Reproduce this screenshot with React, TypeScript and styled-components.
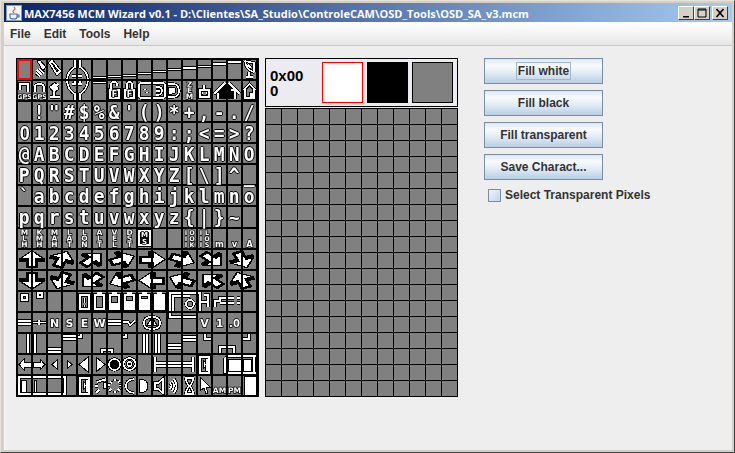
import React from "react";
import styled, { createGlobalStyle } from "styled-components";

const Global = createGlobalStyle`
  html, body { margin: 0; padding: 0; background: #d4d0c8; }
  #root { width: 735px; height: 453px; overflow: hidden; }
`;

const Frame = styled.div`
  box-sizing: border-box; width: 735px; height: 453px; display: flex; flex-direction: column;
  background: #d4d0c8; border: 1px solid; border-color: #e6e3dc #404040 #404040 #e6e3dc; padding: 2px 2px 2px 3px;
`;
const TitleBar = styled.div`
  height: 19px; flex: none; display: flex; align-items: center; padding: 0 4px 0 2px;
  background: linear-gradient(90deg, #0a246a 0%, #a6caf0 100%);
`;
const TitleIcon = styled.svg`width: 16px; height: 16px; flex: none; margin-right: 2px;`;
const TitleText = styled.div`
  flex: 1; color: #fff; font: bold 11px/17px "Open Sans", sans-serif; padding-top: 1px; white-space: nowrap; letter-spacing: 0;
`;
const WinBtn = styled.div<{ $gap?: number }>`
  width: 16px; height: 14px; box-sizing: border-box; flex: none; background: #d4d0c8; margin-left: ${p => p.$gap ?? 0}px;
  border: 1px solid; border-color: #fff #404040 #404040 #fff; display: grid; place-items: center;
`;
const BtnGlyph = styled.svg`width: 12px; height: 10px;`;
const MenuBar = styled.div`
  height: 24px; flex: none; display: flex; align-items: center; gap: 13px; padding: 0 0 0 6px; box-sizing: border-box;
  background: linear-gradient(180deg, #ffffff 0%, #f4f4f4 50%, #e6e6e6 100%); border-bottom: 1px solid #c8c8c8;
`;
const MenuItem = styled.span`font: bold 12px "Liberation Sans", Arial, sans-serif; color: #333;`;
const Content = styled.div`
  flex: 1; display: flex; align-items: flex-start; background: #eeeeee; padding: 12px 0 0 12px; box-shadow: inset 1px 0 #fafafa;
`;
const CharGrid = styled.div`
  width: 243px; height: 339px; box-sizing: border-box; flex: none; background: #000; padding: 2px 1px 0 2px;
  display: grid; grid-template-columns: repeat(16, 13px); grid-template-rows: repeat(16, 19.07px); column-gap: 2px; row-gap: 2px;
`;
const Cell = styled.div<{ $sel?: boolean }>`
  background: #808080; display: grid; place-items: center;
  box-shadow: ${p => (p.$sel ? "inset 0 0 0 1px #f00, 0 0 0 1px #f00" : "none")};
`;
const Letter = styled.span<{ $plain?: boolean }>`
  font: bold 17px/19px ${p => (p.$plain ? '"Liberation Sans", Arial' : '"DejaVu Sans Mono"')}, monospace;
  color: #fff; display: block; height: 19px; transform: translateY(1px) scale(1.06, 1.14); will-change: transform;
  text-shadow: 1px 0 #000, -1px 0 #000, 0 1px #000, 0 -1px #000;
`;
const GlyphSvg = styled.svg`width: 13px; height: 19px; display: block; overflow: hidden; will-change: transform;`;
const SmallText = styled.text<{ $size: number }>`
  font: bold ${p => p.$size}px "DejaVu Sans", sans-serif; fill: #fff; text-anchor: middle; stroke: #000; stroke-width: 1.4px; paint-order: stroke;
`;
const EditorCol = styled.div`width: 193px; margin-left: 6px; flex: none; display: flex; flex-direction: column; gap: 1px;`;
const InfoPanel = styled.div`
  height: 49px; box-sizing: border-box; border: 1px solid #000; background: #ecebf0; display: flex; align-items: center; padding: 0 4px; gap: 4px;
`;
const InfoLabel = styled.div`width: 52px; margin-right: -4px; font: bold 15px/15px "Liberation Sans", Arial, sans-serif; color: #000; margin-top: 1px;`;
const Swatch = styled.div<{ $bg: string; $line: string }>`
  width: 41px; height: 41px; box-sizing: border-box; background: ${p => p.$bg}; border: 1px solid ${p => p.$line};
`;
const EditGrid = styled.div`
  background: #000; padding: 1px; display: grid; grid-template-columns: repeat(12, 15px); grid-auto-rows: 15px; gap: 1px;
`;
const EditCell = styled.div`background: #808080;`;
const Controls = styled.div`width: 119px; margin-left: 26px; flex: none; display: flex; flex-direction: column; gap: 6px;`;
const Button = styled.button`
  height: 26px; width: 119px; box-sizing: border-box; padding: 0; border: 1px solid #7a8ea3; color: #333; display: grid; place-items: center;
  font: bold 12px "Liberation Sans", Arial, sans-serif;
  background: linear-gradient(180deg, #dde8f3 0%, #f8fbfd 28%, #e3edf6 55%, #b8cfe5 100%);
`;
const Focus = styled.span<{ $on?: boolean }>`
  padding: 1px 1px; border: 1px solid ${p => (p.$on ? "#a3b8cc" : "transparent")};
`;
const CheckRow = styled.label`display: flex; align-items: center; gap: 4px; margin: 2px 0 0 4px; white-space: nowrap; font: bold 12px "Liberation Sans", Arial, sans-serif; color: #333;`;
const CheckBox = styled.span`
  width: 13px; height: 13px; box-sizing: border-box; flex: none; border: 1px solid #7a8ea3;
  background: linear-gradient(135deg, #eef4fa 0%, #c4d6e8 100%);
`;

type G = {
  s?: string; b?: string; w?: string;
  t?: [number, number, string][]; size?: number; ox?: number; rot?: number; big?: string;
};

const line = (y: number): G => ({ s: `M0 ${y}H13` });
const stack = (a: string, b: string, c: string): G => ({ t: [[6.5, 6, a], [6.5, 12, b], [6.5, 18, c]], size: 7.5 });
const batt = (top: number): G => ({ s: "M2 3H11V17H2Z M4 1H9", w: top < 17 ? `M2 ${top}H11V17H2Z` : undefined });
const letter = (c: string): G => ({ t: [[6.5, 14, c]], size: 11 });
const blank: G = {};

const row0: G[] = [
  blank,
  { w: "M4 1L7 0L13 7L10 11Z", s: "M4 10L9 15M3 13L7 16M6 9L11 13" },
  { s: "M2 3L4 1L12 11L9 14Z" },
  { s: "M12 0V7Q5 11 4 19 M9 16H13" },
  { s: "M2 0V7Q9 11 10 19 M0 16H4" },
  line(17.5), line(16.5), line(15.5), line(13.5), line(11.5), line(9.5), line(8), line(6.5), line(4), line(2),
  { s: "M2 1Q3 10 11 12 M2 1L11 3L11 12 M6 12V17 M3 17H10 M5 5L8 8" },
];
const row1: G[] = [
  { s: "M2 9V3H10V11", t: [[6.5, 18, "GPS"]], size: 6.5 },
  { s: "M2 11V6Q2 3 6 3Q11 3 11 6V11", t: [[6.5, 18, "GPS"]], size: 6.5 },
  { w: "M1 6L7 1L11 8L6 12Z", s: "M6 7L10 3 M6 11V15 M2 16H12" },
  { s: "M4 0Q5 9 12 13V19 M9 3H13 M12 0V3" },
  { s: "M10 0Q9 9 2 13V19 M0 3H4 M2 0V3" },
  line(1.5),
  { s: "M3 9V4Q3 1 6 1Q9 1 9 4V5 M2 9H11V17H2Z", t: [[6.5, 16, "F"]], size: 8 },
  { s: "M4 9V4Q4 1 6.5 1Q9 1 9 4V9 M2 9H11V17H2Z", t: [[6.5, 16, "F"]], size: 8 },
  { s: "M13 2H4Q1 2 1 5V14Q1 17 4 17H13 M7 8V9 M9 11V12" },
  { s: "M0 2H9Q12 2 12 5V14Q12 17 9 17H0 M3 6Q9 5 9 10Q9 14 3 14 M3 10H7" },
  { s: "M0 3H5Q11 3 11 10Q11 16 5 16H0", w: "M0 6H4Q8 6 8 10Q8 13 4 13H0Z" },
  { t: [[6.5, 6, "Z"], [6.5, 12, "E"], [6.5, 18, "M"]], size: 7.5 },
  { s: "M6 4V9 M2 9H11V16H2Z M4 12H5 M8 12H9" },
  { b: "M2 13L13 2V18H5V13Z", s: "M1 13L12 2 M5 12V18" },
  { b: "M0 2L12 13H9V18H0Z", s: "M1 2L12 13 M3 9H7V18" },
  { s: "M1 9L6.5 3L12 9 M2 9V17H11V9", w: "M6 11H10V17H6Z" },
];
const row8: G[] = [
  stack("M", "L", "H"), stack("K", "M", "H"), stack("M", "A", "H"), stack("L", "A", "T"),
  stack("L", "O", "N"), stack("A", "L", "T"), stack("V", "E", "L"), stack("D", "S", "T"),
  { b: "M1 2H12V16H1Z", s: "M1 2H12V16H1Z", t: [[6.5, 8, "M"], [6.5, 15, "S"]], size: 7 },
  blank, blank,
  { t: [[3, 6, "I"], [9, 6, "O"], [3, 12, "I"], [9, 12, "O"], [3, 18, "I"], [9, 18, "K"]], size: 6.5 },
  { t: [[3, 6, "I"], [9, 6, "L"], [3, 12, "I"], [9, 12, "O"], [3, 18, "I"], [9, 18, "S"]], size: 6.5 },
  { t: [[6.5, 18, "m"]], size: 8.5 }, { t: [[6.5, 18, "v"]], size: 8.5 }, { t: [[6.5, 18, "A"]], size: 8.5 },
];
const arrowPair = (i: number): G[] => [{ rot: i * 22.5, ox: 0 }, { rot: i * 22.5, ox: 15 }];
const row9: G[] = [0, 1, 2, 3, 4, 5, 6, 7].flatMap(arrowPair);
const row10: G[] = [8, 9, 10, 11, 12, 13, 14, 15].flatMap(arrowPair);
const row11: G[] = [
  { s: "M4 3H9V8H4Z" }, { s: "M5 1H9V5H5Z" }, blank, blank,
  { s: "M2 3H11V17H2Z M6.5 6V11 M6.5 13V15" },
  batt(17), batt(10), batt(8), batt(6), batt(3),
  { s: "M2 19V1H13 M5 19V4H13" },
  { s: "M0 1H13 M0 4H7 M7 8A4 4 0 1 1 7 16A4 4 0 1 1 7 8" },
  { s: "M0 1H2V19 M6 3H10V15 M2 10H10" },
  { s: "M2 15V9H7V6H13 M7 11H13" },
  { s: "M0 6H6 M0 11H6 M9 6H12 M9 11H12" },
  blank,
];
const row12: G[] = [
  { s: "M0 8H13 M0 11H13" }, { s: "M0 9.5H13 M6 7V12" },
  letter("N"), letter("S"), letter("E"), letter("W"),
  { s: "M0 8H13 M0 11H13" }, { s: "M0 9H5L7 12L12 8" },
  { s: "M13 4Q6 4 6 10Q6 16 13 16", w: "M13 6L9 12H13Z" }, { s: "M0 4Q7 4 7 10Q7 16 0 16", w: "M0 6L4 12H0Z" },
  { s: "M2 0V4H13" }, { s: "M0 4H13" },
  letter("V"), letter("1"), { t: [[6.5, 14, ".0"]], size: 10 }, blank,
];
const row13: G[] = [
  { s: "M10 0V19" }, { s: "M2 0V19" }, { s: "M0 15H13 M0 18H13" }, { s: "M0 2H13 M0 5H13" },
  { s: "M3 0V3H0" }, { s: "M9 19V16H13" }, { s: "M0 16H4V19" }, { s: "M3 0V3H0" },
  { s: "M6 0V19 M9 0V19" }, { s: "M3 0V19 M6 0V19" }, { s: "M0 11H13 M0 14H13" }, { s: "M0 3H13 M0 6H13" },
  { s: "M7 0V5H13" }, { s: "M7 19V13H13" }, { s: "M0 13H6V19" }, { s: "M0 5H6V0" },
];
const row14: G[] = [
  { w: "M1 9.5L6 4V7H13V12H6V15Z" }, { w: "M12 9.5L7 4V7H0V12H7V15Z" },
  { w: "M4 9.5L9 5V14Z" }, { w: "M9 9.5L4 5V14Z" },
  { w: "M1 9.5L10 2V17Z" }, { w: "M12 9.5L3 2V17Z" },
  { s: "M6.5 4A5.5 5.5 0 1 1 6.5 15A5.5 5.5 0 1 1 6.5 4", b: "M6.5 4A5.5 5.5 0 1 1 6.5 15A5.5 5.5 0 1 1 6.5 4" },
  { s: "M6.5 3A6 6 0 1 1 6.5 15A6 6 0 1 1 6.5 3 M6.5 7A2 2 0 1 1 6.5 11A2 2 0 1 1 6.5 7" },
  blank,
  { s: "M2 2V17 M2 8H13 M2 11H13" }, { s: "M0 8H13 M0 11H13" }, { s: "M0 8H10 M0 11H10 M10 2V17" },
  { s: "M2 2H11V18H2Z M9 4V16", w: "M5 5L9 9.5L5 14Z" },
  { s: "M12 3H13 M12 3V17H13" },
  { w: "M0 4H13V16H0Z", s: "M0 1H13 M0 18H13" },
  { w: "M0 4H8V16H0Z", s: "M0 1H13 M0 18H13 M11 1V18" },
];
const row15: G[] = [
  { w: "M3 4H8V16H3Z", s: "M0 1H13 M0 18H13 M1 1V18" },
  { w: "M1 4H3V16H1Z", s: "M0 1H13 M0 18H13" },
  { s: "M0 1H13 M0 18H13" },
  { s: "M0 1H2V18H0" },
  { s: "M2 2H11V18H2Z M9 4V16", w: "M5 5L9 9.5L5 14Z" },
  { s: "M4 6L13 3 M5 10H2 M6 14L3 17 M11 5L13 3", w: "M10 7L13 6V13L10 12Z" },
  { s: "M2 6L4 7 M0 9H2 M3 13L1 15 M7 3V5 M7 15V17 M10 6L12 5 M10 13L12 15 M11 9.5H13" },
  { s: "M11 3Q3 4 3 10Q3 16 11 17" },
  { w: "M1 3Q10 3 10 10Q10 17 1 17Z" },
  { s: "M2 7H5L10 3V17L5 13H2Z" },
  { s: "M2 7Q5 9.5 2 13 M4 5Q8 9.5 4 15 M6 3Q11 9.5 6 17" },
  { s: "M2 2H11 M2 18H11 M3 2Q3 7 6.5 10Q10 7 10 2 M3 18Q3 13 6.5 10Q10 13 10 18", w: "M4 16L6.5 12L9 16Z" },
  { w: "M2 1L12 11H8L10 17L8 18L6 12L2 15Z" },
  { t: [[6.5, 17, "AM"]], size: 7.5 }, { t: [[6.5, 17, "PM"]], size: 7.5 },
  { w: "M1 0H13V19H1Z" },
];

const textRow = (s: string): G[] => Array.from(s).map(c => ({ big: c === " " ? "" : c }));
const rows: G[] = [
  ...row0, ...row1,
  ...textRow(" !\"#$%&'()*+,-./"),
  ...textRow("0123456789:;<=>?"),
  ...textRow("@ABCDEFGHIJKLMNO"),
  ...textRow("PQRSTUVWXYZ[\\]^_"),
  ...textRow("`abcdefghijklmno"),
  ...textRow("pqrstuvwxyz{|}~ "),
  ...row8, ...row9, ...row10, ...row11, ...row12, ...row13, ...row14, ...row15,
];

const Glyph: React.FC<{ g: G }> = ({ g }) => {
  if (g.big !== undefined) return <Letter $plain={g.big === "0"}>{g.big}</Letter>;
  if (g.rot !== undefined) {
    const ox = g.ox ?? 0;
    return (
      <GlyphSvg viewBox={`${ox} 0 13 19`}>
        <g transform={`translate(14 9.5) scale(1.2 .8) rotate(${g.rot})`} shapeRendering="crispEdges">
          <path d="M0 -12L11 -1V3H5V11H-5V3H-11V-1Z" fill="#000" />
          <path d="M0 -10L8 -2H2.5V8H-2.5V-2H-8Z" fill="#fff" />
        </g>
      </GlyphSvg>
    );
  }
  return (
    <GlyphSvg viewBox="0 0 13 19">
      <g shapeRendering="crispEdges">
        {g.b && <path d={g.b} fill="#000" />}
        {g.s && <path d={g.s} fill="none" stroke="#000" strokeWidth={3.4} />}
        {g.w && <path d={g.w} fill="#fff" stroke="#000" strokeWidth={1} />}
        {g.s && <path d={g.s} fill="none" stroke="#fff" strokeWidth={1.6} />}
      </g>
      {g.t?.map(([x, y, str], i) => <SmallText key={i} x={x} y={y} $size={g.size ?? 7}>{str}</SmallText>)}
    </GlyphSvg>
  );
};

export default function App() {
  return (
    <>
      <Global />
      <Frame>
        <TitleBar>
          <TitleIcon viewBox="0 0 16 16">
            <rect x="0.5" y="0.5" width="15" height="15" fill="#f4f4f4" stroke="#8a9bb5" />
            <path d="M8 2Q10 4 8 5Q6 6 8 8" fill="none" stroke="#e0642a" strokeWidth="1.2" />
            <path d="M4 9H11V12Q11 14 8 14Q4 14 4 12Z M11 10H13V12H11" fill="none" stroke="#3b6ea8" strokeWidth="1.1" />
          </TitleIcon>
          <TitleText>MAX7456 MCM Wizard v0.1 - D:\Clientes\SA_Studio\ControleCAM\OSD_Tools\OSD_SA_v3.mcm</TitleText>
          <WinBtn><BtnGlyph viewBox="0 0 12 10"><path d="M3 8H9V9.5H3Z" fill="#000" /></BtnGlyph></WinBtn>
          <WinBtn><BtnGlyph viewBox="0 0 12 10"><path d="M2 1H10V9H2Z M2 2H10" fill="none" stroke="#000" strokeWidth="1" /></BtnGlyph></WinBtn>
          <WinBtn $gap={2}><BtnGlyph viewBox="0 0 12 10"><path d="M2.5 1L9.5 9M9.5 1L2.5 9" fill="none" stroke="#000" strokeWidth="1.6" /></BtnGlyph></WinBtn>
        </TitleBar>
        <MenuBar>
          <MenuItem>File</MenuItem><MenuItem>Edit</MenuItem><MenuItem>Tools</MenuItem><MenuItem>Help</MenuItem>
        </MenuBar>
        <Content>
          <CharGrid>
            {rows.map((g, i) => <Cell key={i} $sel={i === 0}><Glyph g={g} /></Cell>)}
          </CharGrid>
          <EditorCol>
            <InfoPanel>
              <InfoLabel>0x00<br />0</InfoLabel>
              <Swatch $bg="#fff" $line="#f00" />
              <Swatch $bg="#000" $line="#000" />
              <Swatch $bg="#808080" $line="#000" />
            </InfoPanel>
            <EditGrid>{Array.from({ length: 216 }, (_, i) => <EditCell key={i} />)}</EditGrid>
          </EditorCol>
          <Controls>
            <Button><Focus $on>Fill white</Focus></Button>
            <Button><Focus>Fill black</Focus></Button>
            <Button><Focus>Fill transparent</Focus></Button>
            <Button><Focus>Save Charact...</Focus></Button>
            <CheckRow><CheckBox />Select Transparent Pixels</CheckRow>
          </Controls>
        </Content>
      </Frame>
    </>
  );
}
